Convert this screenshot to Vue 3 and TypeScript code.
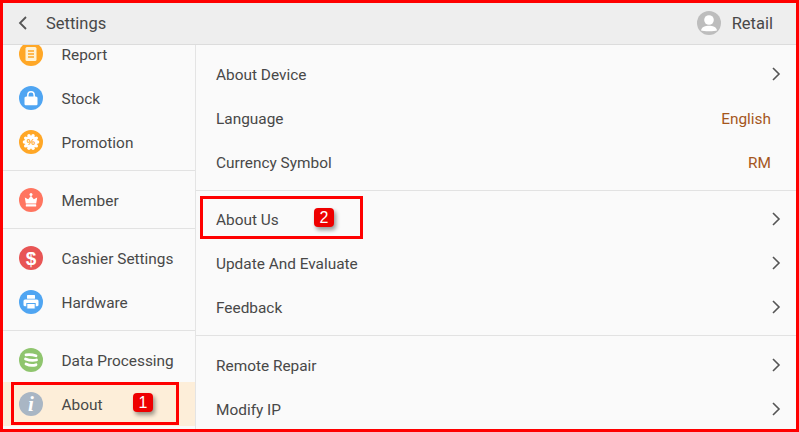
<script setup lang="ts">
interface SideItem {
  label: string
  icon: string
  color: string
  active?: boolean
}

interface RowItem {
  label: string
  value?: string
}

const sideGroups: SideItem[][] = [
  [
    { label: 'Report', icon: 'report', color: '#ffa726' },
    { label: 'Stock', icon: 'stock', color: '#4fa5f2' },
    { label: 'Promotion', icon: 'promo', color: '#ffa726' }
  ],
  [{ label: 'Member', icon: 'member', color: '#ff7560' }],
  [
    { label: 'Cashier Settings', icon: 'cashier', color: '#e85555' },
    { label: 'Hardware', icon: 'hardware', color: '#4fa5f2' }
  ],
  [
    { label: 'Data Processing', icon: 'data', color: '#8fc56e' },
    { label: 'About', icon: 'about', color: '#a9b6c4', active: true }
  ]
]

const rowGroups: RowItem[][] = [
  [
    { label: 'About Device' },
    { label: 'Language', value: 'English' },
    { label: 'Currency Symbol', value: 'RM' }
  ],
  [{ label: 'About Us' }, { label: 'Update And Evaluate' }, { label: 'Feedback' }],
  [{ label: 'Remote Repair' }, { label: 'Modify IP' }]
]

// scallops round the promotion badge
const scallops = Array.from({ length: 10 }, (_, i) => {
  const a = (i * Math.PI) / 5
  return { x: 12 + 6.6 * Math.cos(a), y: 12 + 6.6 * Math.sin(a) }
})
</script>

<template>
  <div class="page">
    <header class="topbar">
      <svg class="back" width="10" height="14" viewBox="0 0 10 14">
        <path d="M8 1 L2 7 L8 13" fill="none" stroke="#555" stroke-width="1.8" />
      </svg>
      <span class="title">Settings</span>
      <svg class="avatar" width="24" height="24" viewBox="0 0 24 24">
        <circle cx="12" cy="12" r="12" fill="#bdbdbd" />
        <circle cx="12" cy="9" r="4.8" fill="#fff" />
        <path d="M4 19.500 C4.500 15.800 8.500 14.800 12 14.800 C15.500 14.800 19.500 15.800 20 19.500 C18 20.500 6 20.500 4 19.500 Z" fill="#fff" />
      </svg>
      <span class="user">Retail</span>
    </header>

    <div class="body">
      <aside class="side">
        <div class="side-list">
          <div v-for="(group, g) in sideGroups" :key="g" class="group">
            <div v-for="item in group" :key="item.label" class="side-row" :class="{ active: item.active }">
              <svg class="side-icon" width="24" height="24" viewBox="0 0 24 24">
                <circle cx="12" cy="12" r="12" :fill="item.color" />
                <g v-if="item.icon === 'report'">
                  <rect x="6.500" y="5" width="11" height="14" rx="1.500" fill="#fff3d6" />
                  <path d="M9 9h6M9 12h6M9 15h6" stroke="#ffa726" stroke-width="1.400" />
                </g>
                <g v-else-if="item.icon === 'stock'">
                  <path d="M8.800 11V9a3.200 3.200 0 0 1 6.400 0v2" fill="none" stroke="#fff" stroke-width="1.500" />
                  <path d="M7 10.500h10l1.500 1v6.500a1.200 1.200 0 0 1-1.200 1.200H6.700A1.200 1.200 0 0 1 5.500 18v-6.500z" fill="#fff" />
                </g>
                <g v-else-if="item.icon === 'promo'">
                  <circle cx="12" cy="12" r="6.500" fill="#fff" />
                  <circle v-for="(s, i) in scallops" :key="i" :cx="s.x" :cy="s.y" r="1.700" fill="#fff" />
                  <text x="12" y="15.200" class="pct">%</text>
                </g>
                <g v-else-if="item.icon === 'member'">
                  <path d="M5.800 9.500l3.400 1.800L12 7.800l2.800 3.500 3.400-1.800-1 5.900H6.800z" fill="#fff" />
                  <circle cx="12" cy="6.400" r="1.500" fill="#fff" />
                  <rect x="6.800" y="16.300" width="10.400" height="2.200" rx=".6" fill="#fff" />
                </g>
                <text v-else-if="item.icon === 'cashier'" x="12" y="18.800" class="dollar">$</text>
                <g v-else-if="item.icon === 'hardware'">
                  <rect x="8" y="5" width="8" height="3.800" rx=".5" fill="#fff" />
                  <rect x="4.500" y="9.600" width="15" height="6.600" rx="1.500" fill="#fff" />
                  <rect x="7.800" y="13.500" width="8.400" height="5.500" fill="#fff" stroke="#4fa5f2" stroke-width="1" />
                </g>
                <g v-else-if="item.icon === 'data'" fill="none" stroke="#fff" stroke-width="2.800" stroke-linecap="round">
                  <path d="M7 6.800 Q12 6 17 7.800" />
                  <path d="M6.500 11 Q12 13.200 17.500 12" />
                  <path d="M7 16 Q12 18.400 17 16.800" />
                </g>
                <text v-else x="12" y="18.500" class="info">i</text>
              </svg>
              <span class="side-label">{{ item.label }}</span>
            </div>
          </div>
        </div>
      </aside>

      <main class="main">
        <div v-for="(group, g) in rowGroups" :key="g" class="group">
          <div v-for="row in group" :key="row.label" class="row">
            <span class="row-label">{{ row.label }}</span>
            <span v-if="row.value" class="row-value">{{ row.value }}</span>
            <svg v-else class="chev" width="10" height="16" viewBox="0 0 10 16">
              <path d="M2 2 L8 8 L2 14" fill="none" stroke="#555" stroke-width="1.600" />
            </svg>
          </div>
        </div>
      </main>
    </div>

    <!-- annotation overlay -->
    <div class="frame"></div>
    <div class="mark mark-about"></div>
    <div class="mark mark-us"></div>
    <span class="badge badge-1">1</span>
    <span class="badge badge-2">2</span>
  </div>
</template>

<style>
html,
body {
  margin: 0;
  overflow: hidden;
}
</style>

<style scoped>
.page {
  position: relative;
  width: 799px;
  height: 432px;
  display: flex;
  flex-direction: column;
  overflow: hidden;
  background: #fafafa;
  color: #484848;
  font-family: Roboto, "Liberation Sans", sans-serif;
  font-size: 15.4px;
}

.topbar {
  flex: none;
  height: 45px;
  box-sizing: border-box;
  display: flex;
  align-items: center;
  padding: 2px 26px 0 18px;
  background: #eeeeee;
  border-bottom: 1px solid #dcdcdc;
}

.title {
  margin-left: 18px;
  font-size: 16.5px;
}

.avatar {
  margin-left: auto;
}

.user {
  margin-left: 11px;
  font-size: 16.5px;
}

.body {
  flex: 1;
  min-height: 0;
  display: flex;
}

.side {
  flex: none;
  width: 196px;
  box-sizing: border-box;
  overflow: hidden;
  border-right: 1px solid #e4e4e4;
}

.side-list {
  margin-top: -20px;
}

.group {
  padding: 7px 0 6px;
  border-bottom: 1px solid #e2e2e2;
}

.group:last-child {
  border-bottom: 0;
}

.side-row {
  height: 44px;
  display: flex;
  align-items: center;
  padding-left: 19px;
}

.side-row.active {
  background: #fdeed9;
}

.side-icon {
  margin-bottom: 1px;
}

.side-label {
  margin-left: 18.500px;
  padding-top: 2px;
  white-space: nowrap;
}

.pct {
  fill: #ffa726;
  font-family: "Liberation Sans", sans-serif;
  font-weight: bold;
  font-size: 9.500px;
  text-anchor: middle;
}

.dollar {
  fill: #fff;
  font-family: "Liberation Sans", sans-serif;
  font-weight: bold;
  font-size: 19px;
  text-anchor: middle;
}

.info {
  fill: #fff;
  font-family: "Liberation Serif", serif;
  font-style: italic;
  font-weight: bold;
  font-size: 21px;
  text-anchor: middle;
}

.main {
  flex: 1;
  min-width: 0;
  overflow: hidden;
}

.main .group:nth-child(2) {
  padding-top: 6px;
}

.row {
  height: 44px;
  display: flex;
  align-items: center;
  justify-content: space-between;
  padding: 0 18px 0 20px;
}

.row-label,
.row-value {
  padding-top: 2px;
}

.row-value {
  margin-right: 10px;
  color: #a5561c;
}

.frame {
  position: absolute;
  inset: 0;
  border: 3px solid #f00;
  pointer-events: none;
}

.mark {
  position: absolute;
  box-sizing: border-box;
  border: 3px solid #f00;
}

.mark-about {
  left: 11px;
  top: 382px;
  width: 168px;
  height: 43px;
}

.mark-us {
  left: 200px;
  top: 196px;
  width: 163px;
  height: 43px;
}

.badge {
  position: absolute;
  width: 20px;
  height: 19px;
  border-radius: 4px;
  background: #ee0000;
  color: #fff;
  font-size: 16px;
  font-family: "Liberation Sans", sans-serif;
  line-height: 20px;
  text-align: center;
  box-shadow: 2px 3px 4px rgba(0, 0, 0, 0.4);
}

.badge-1 {
  left: 133px;
  top: 393px;
}

.badge-2 {
  left: 314px;
  top: 208px;
}
</style>
